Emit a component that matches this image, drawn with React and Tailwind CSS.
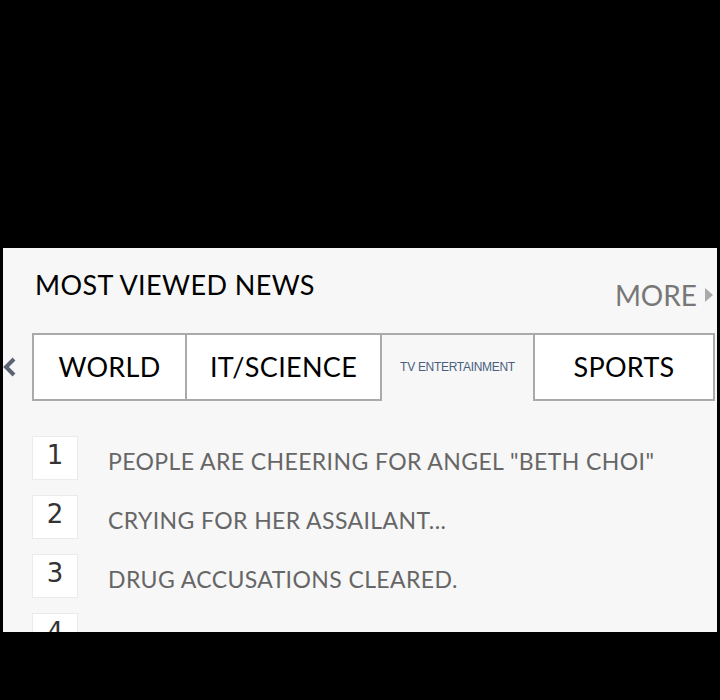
import React from 'react';

const TABS = [
    { label: 'WORLD', width: 'w-[155px]', active: false },
    { label: 'IT/SCIENCE', width: 'w-[195px]', active: false },
    { label: 'TV ENTERTAINMENT', width: 'w-[153px]', active: true },
    { label: 'SPORTS', width: 'w-[180px]', active: false },
];

const NEWS = [
    'PEOPLE ARE CHEERING FOR ANGEL "BETH CHOI"',
    'CRYING FOR HER ASSAILANT...',
    'DRUG ACCUSATIONS CLEARED.',
    '',
];

const App = () => {
    return (
        <div className="w-[720px] h-[700px] bg-black pt-[248px] pl-[3px] font-['Lato',sans-serif]">
            <div className="w-[714px] h-[384px] bg-[#f7f7f7] overflow-hidden">
                {/* Header */}
                <div className="flex items-start justify-between pl-[32px] pr-[4px] pt-[21px] h-[85px]">
                    <h2 className="text-[27px] leading-[32px] text-black tracking-[0.4px]">MOST VIEWED NEWS</h2>
                    <div className="flex items-center gap-[8px] mt-[10px]">
                        <span className="text-[28px] leading-[32px] text-[#777]">MORE</span>
                        <svg width="8" height="14" viewBox="0 0 8 14">
                            <path d="M0 0 L8 7 L0 14 Z" fill="#aaa" />
                        </svg>
                    </div>
                </div>

                {/* Tabs */}
                <div className="flex items-stretch h-[68px]">
                    <div className="w-[29px] flex items-center">
                        <svg width="14" height="20" viewBox="0 0 14 20">
                            <path d="M11 2 L3 10 L11 18" stroke="#5b6472" strokeWidth="4" fill="none" />
                        </svg>
                    </div>
                    {TABS.map((tab, i) => (
                        <div
                            key={tab.label}
                            className={`${tab.width} flex items-center justify-center border-[#aaaaaa] ${
                                tab.active
                                    ? 'border-t-2 border-r-2 bg-[#f7f7f7]'
                                    : i === 0
                                        ? 'border-2 bg-white'
                                        : 'border-y-2 border-r-2 bg-white'
                            }`}
                        >
                            {tab.active ? (
                                <span className="text-[12px] text-[#4a5f80] font-['Liberation_Sans',sans-serif] tracking-[-0.3px] pb-[2px]">{tab.label}</span>
                            ) : (
                                <span className="text-[27px] text-black tracking-[0.3px]">{tab.label}</span>
                            )}
                        </div>
                    ))}
                </div>

                {/* List */}
                <div className="flex flex-col gap-[15px] pl-[29px] pt-[35px]">
                    {NEWS.map((title, i) => (
                        <div key={i} className="flex items-center gap-[30px]">
                            <div className="w-[46px] h-[44px] bg-white border border-[#ebebeb] flex justify-center pt-[3px] shrink-0">
                                <span className="text-[26px] leading-[30px] text-[#333] font-['DejaVu_Sans',sans-serif]">{i + 1}</span>
                            </div>
                            <span className="text-[23px] text-[#666] tracking-[0.4px] pt-[6px]">{title}</span>
                        </div>
                    ))}
                </div>
            </div>
        </div>
    );
};

export default App;
